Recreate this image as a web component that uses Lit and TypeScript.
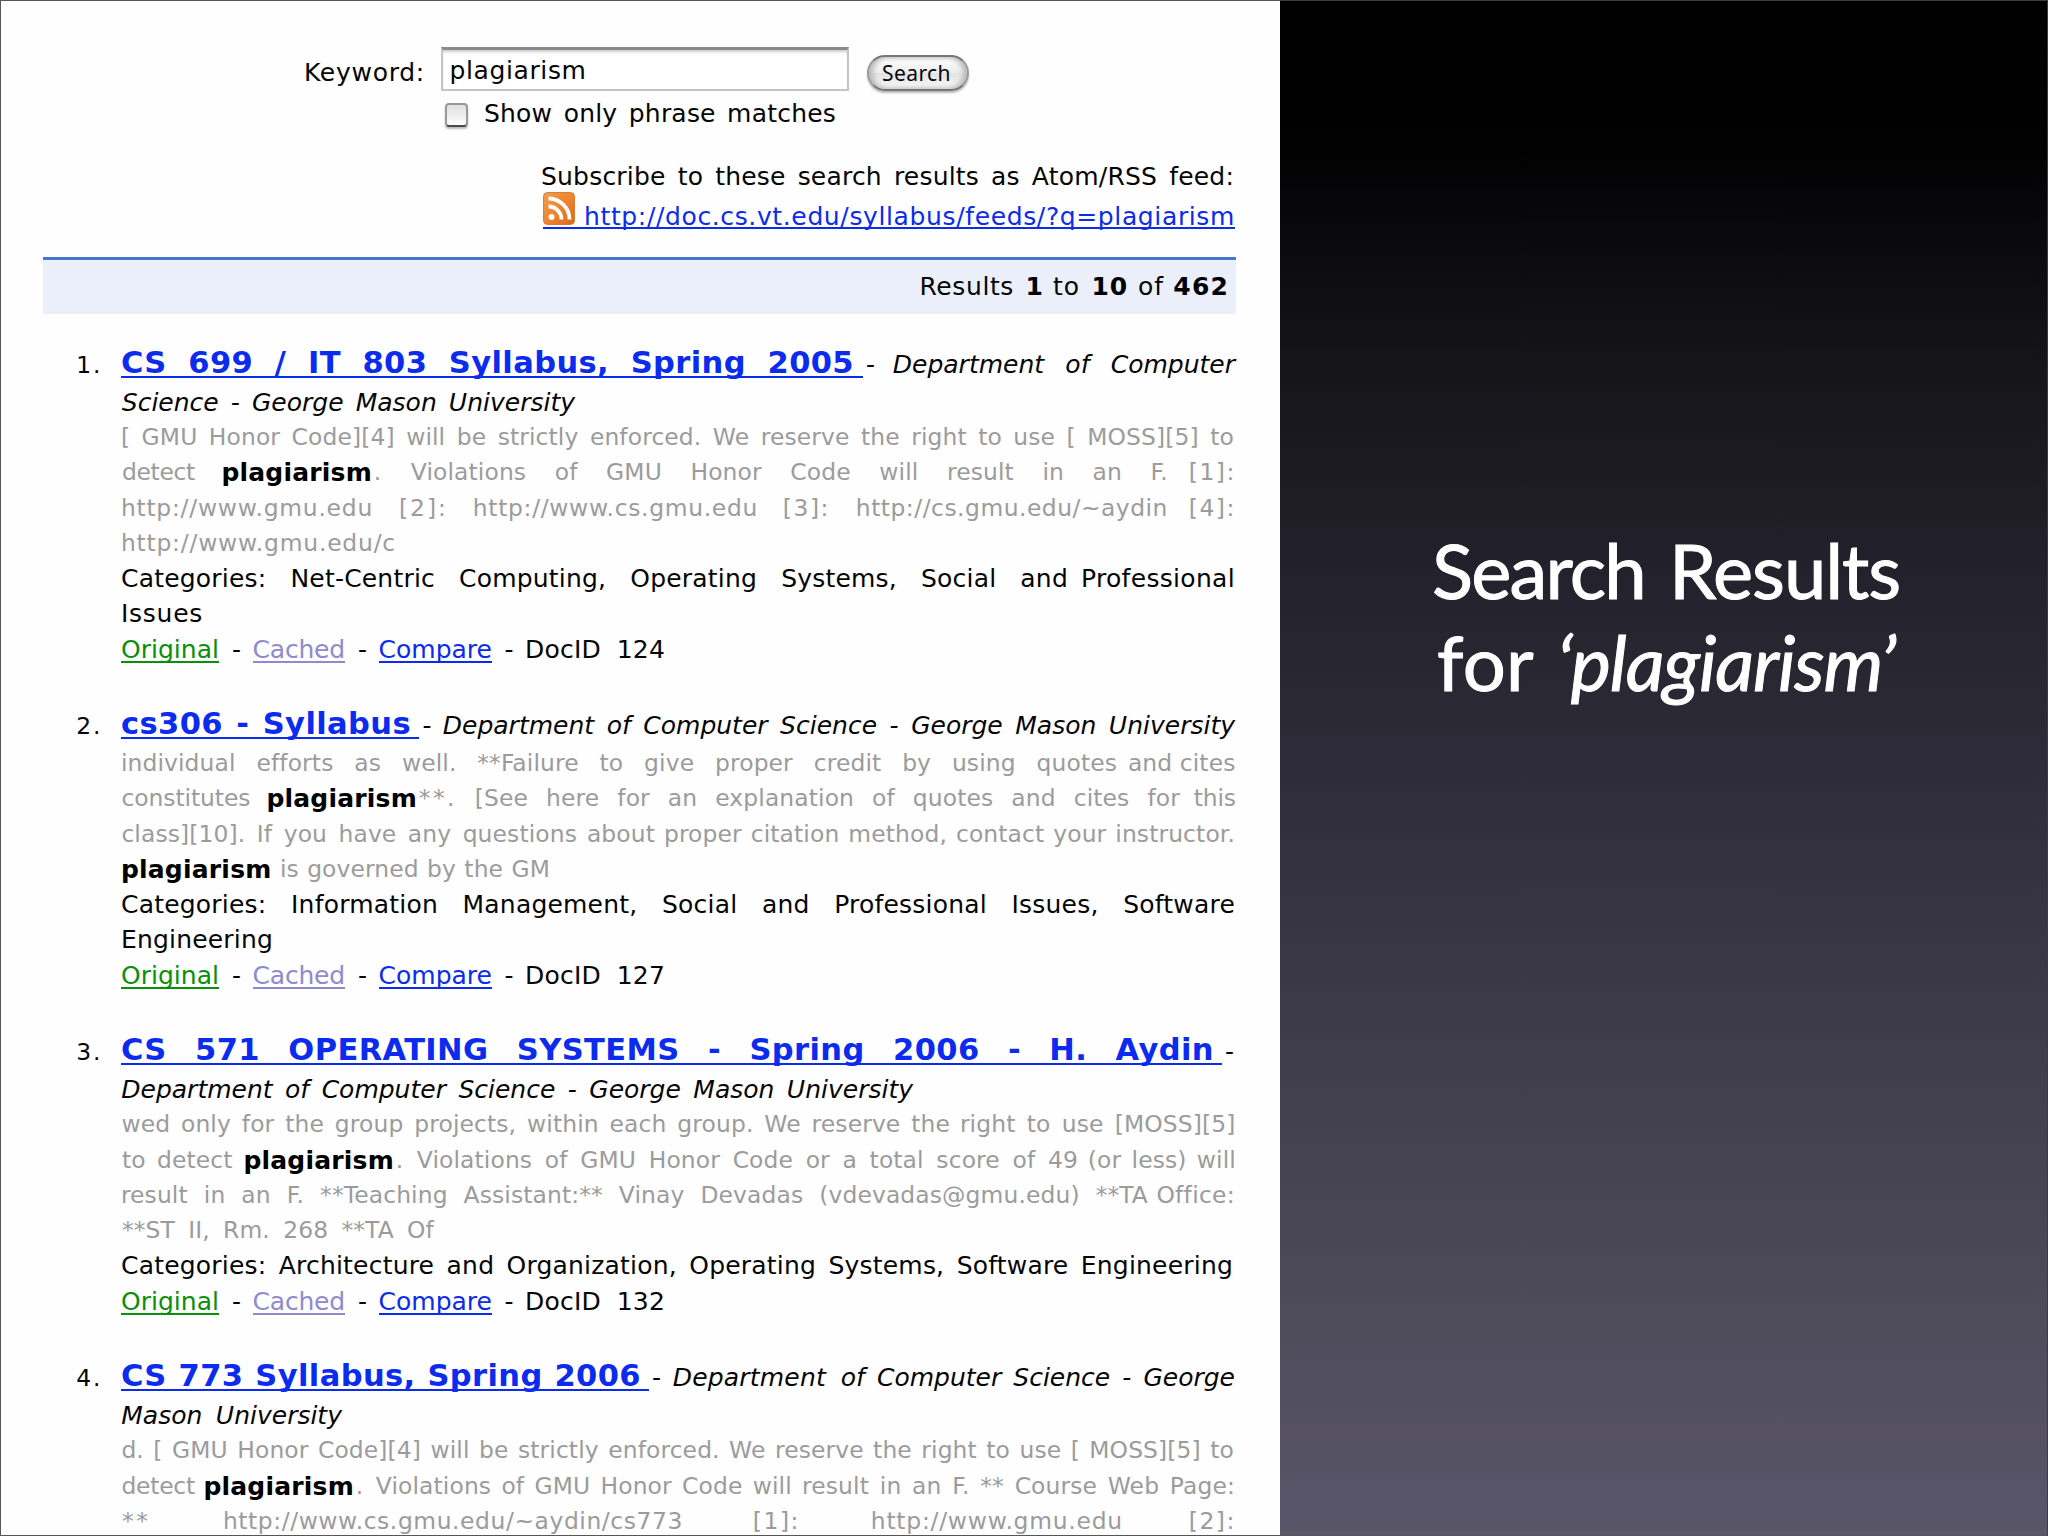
import { LitElement, html, css, svg } from "lit";
import { customElement } from "lit/decorators.js";
import { styleMap } from "lit/directives/style-map.js";

// A run is a stretch of words set between two x positions of the page.
type Run = { t: string; a: number; b: number; c: string; pad?: number };
const r = (c: string, dx = 0) => (t: string, a: number, b: number, pad?: number): Run => ({ t, a: a + dx, b, c, pad });
const T = r("title"), I = r("ital", 0.8), G = r("grey", 0.9), B = r("bold", 0.4), N = r("norm");
const links = (id: number): Run[] => [
  r("norm link green")("Original", 121, 219), N("-", 232, 242),
  r("norm link mauve")("Cached", 252.5, 345), N("-", 358, 368),
  r("norm link blue")("Compare", 378.5, 492), N("-", 504.5, 514.5),
  N("DocID " + id, 525, 665),
];

const results: Run[][][] = [
  [
    [T("CS 699 / IT 803 Syllabus, Spring 2005", 121, 854, 9), N("-", 866, 875), I("Department of Computer", 892, 1235)],
    [I("Science - George Mason University", 121, 575)],
    [G("[ GMU Honor Code][4] will be strictly enforced. We reserve the right to use [ MOSS][5] to", 120, 1234)],
    [G("detect", 121, 195), B("plagiarism", 221, 372), G(".", 373, 380), G("Violations of GMU Honor Code will result in an F.", 410, 1168), G("[1]:", 1188, 1236)],
    [G("http://www.gmu.edu", 120, 373), G("[2]:", 398, 448), G("http://www.cs.gmu.edu", 472, 758), G("[3]:", 782, 830), G("http://cs.gmu.edu/~aydin", 855, 1168), G("[4]:", 1188, 1236)],
    [G("http://www.gmu.edu/c", 120, 396)],
    [N("Categories: Net-Centric Computing, Operating Systems, Social and", 121, 1068), N("Professional", 1081, 1235)],
    [N("Issues", 121, 203)],
    links(124),
  ],
  [
    [T("cs306 - Syllabus", 121, 411, 8), N("-", 422.5, 432), I("Department of Computer Science - George Mason University", 442, 1235)],
    [G("individual efforts as well. **Failure to give proper credit by using quotes", 120, 1117), G("and cites", 1127, 1235.5)],
    [G("constitutes", 120.5, 250.5), B("plagiarism", 266, 417), G("**.", 418, 457), G("[See here for an explanation of quotes and cites for", 474, 1180), G("this", 1193, 1236)],
    [G("class][10]. If you have any questions", 120.5, 577), G("about proper citation method, contact your instructor.", 586, 1235)],
    [B("plagiarism", 120.5, 271.5), G("is governed by the GM", 279, 550)],
    [N("Categories: Information Management, Social and Professional Issues, Software", 121, 1235)],
    [N("Engineering", 121, 273)],
    links(127),
  ],
  [
    [T("CS 571 OPERATING SYSTEMS - Spring 2006 - H. Aydin", 121, 1214, 8), N("-", 1225, 1235)],
    [I("Department of Computer Science - George Mason University", 120.5, 913)],
    [G("wed only for the group projects, within each group. We reserve the", 120.5, 950), G("right to use [MOSS][5]", 959, 1235.5)],
    [G("to detect", 121, 232.5), B("plagiarism", 243, 394), G(".", 395, 402), G("Violations of GMU Honor Code or a total score of 49", 416, 1078), G("(or less) will", 1087, 1236)],
    [G("result in an F. **Teaching Assistant:** Vinay Devadas (vdevadas@gmu.edu) **TA", 120, 1148), G("Office:", 1155.5, 1235)],
    [G("**ST II, Rm. 268 **TA Of", 121, 434)],
    [N("Categories: Architecture and Organization, Operating Systems, Software Engineering", 121, 1233)],
    links(132),
  ],
  [
    [T("CS 773 Syllabus, Spring 2006", 121, 641, 8), N("-", 652, 662), I("Department", 672, 826), I("of Computer Science - George", 840, 1235)],
    [I("Mason University", 120.5, 342)],
    [G("d. [ GMU Honor Code][4] will be strictly enforced. We reserve the right to use [ MOSS][5] to", 120.5, 1234)],
    [G("detect", 120.5, 195), B("plagiarism", 203, 354), G(".", 355, 362), G("Violations of GMU Honor Code will result", 375, 869), G("in an F. ** Course Web Page:", 879, 1235)],
    [G("**", 121, 150.5), G("http://www.cs.gmu.edu/~aydin/cs773", 222, 683), G("[1]:", 752, 800), G("http://www.gmu.edu", 870, 1123), G("[2]:", 1188, 1236)],
  ],
];

// Lays runs out in a row; each run's left margin is the gap after the one before it.
const row = (runs: Run[], from: number) => {
  let x = from;
  return runs.map((q) => {
    const pad = q.pad ?? 0;
    const s = { marginLeft: `${q.a - x}px`, width: `${q.b - q.a + pad}px`, paddingRight: `${pad}px` };
    x = q.b + pad;
    return html`<span class="run ${q.c}" style=${styleMap(s)}><span class="ink">${q.t}</span></span>`;
  });
};

@customElement("app-root")
export class AppRoot extends LitElement {
  static styles = css`
    :host { display: block; width: 2048px; height: 1536px; overflow: hidden; }
    * { box-sizing: border-box; }
    .slide { display: grid; grid-template-columns: 1280px 1fr; height: 1536px; }
    .page {
      height: 1536px; overflow: hidden; background: #fefefe; color: #050505;
      border: 1px solid #555; border-right: 0;
      font: 25px/35.25px "DejaVu Sans", Verdana, sans-serif;
    }
    .line { display: flex; height: 35.25px; white-space: nowrap; }
    .run {
      display: block; flex: none; height: 35.25px; word-spacing: -0.12em;
      text-align: justify; text-align-last: justify; white-space: nowrap;
    }
    .norm { letter-spacing: 0.2px; }
    .grey { font-size: 23.4px; color: #9b9b9d; letter-spacing: 0.12px; }
    .ital { font-style: italic; }
    .bold { font-weight: bold; color: #000; }
    .title {
      font-size: 30.5px; line-height: 31.5px; letter-spacing: 0.4px; font-weight: bold; color: #0b2bee;
      background: linear-gradient(#0b2bee, #0b2bee) 0 29px / 100% 2px no-repeat;
    }
    .link { background: linear-gradient(currentColor, currentColor) 0 29px / 100% 2px no-repeat; }
    .green { color: #0a8f0a; }
    .mauve { color: #8f8ad0; }
    .blue { color: #0b2bee; }
    .form { padding-top: 46px; height: 158px; }
    .query { display: flex; height: 46px; }
    .query .run { margin-top: 8px; }
    .query .field { 
      width: 408px; height: 44px; margin-left: 16px; padding-left: 7px; display: flex;
      border: 2px solid #c4c4c4; border-top: 3px solid #8a8a8a; background: #fff;
      box-shadow: inset 0 3px 3px -1px #ccc;
    }
    .query .field .run { margin-top: 3px; }
    .btn {
      width: 102px; height: 36px; margin: 8px 0 0 18px; display: flex; border-radius: 18px;
      border: 2px solid #777; border-left-color: #999; border-right-color: #999;
      background: linear-gradient(#fff, #ececec 50%, #e2e2e2 52%, #fafafa);
      box-shadow: 0 2px 2px #bbb, inset 4px 0 5px #bbb, inset -4px 0 5px #bbb;
      font-family: "Noto Sans", sans-serif; font-size: 21px;
    }
    .query .btn .run { line-height: 32px; height: 32px; margin-top: 0; }
    .phrase { display: flex; height: 36px; margin-top: 2px; }
    .phrase .run { margin-top: 1px; }
    .check {
      width: 23px; height: 24px; margin: 8px 0 0 444px; border: 2px solid #999; border-bottom-color: #4a4a4a; border-radius: 4px;
      background: linear-gradient(#e0e0e0, #fdfdfd); box-shadow: 0 2px 2px #bbb; flex: none;
    }
    .rssline { background: linear-gradient(#0b2bee, #0b2bee) 542px 35px / 692px 2px no-repeat; height: 45px; margin-top: -2px; }
    .rss { width: 32px; height: 33px; margin-left: 542px; flex: none; }
    .rssline .run { margin-top: 7px; }
    .bar {
      margin: 20px 0 0 42px; width: 1193px; height: 57px; background: #eaeffa; border-top: 3px solid #4478cc;
      padding-top: 9px; display: flex;
    }
    .item { display: flex; }
    .num { width: 102px; padding-right: 0.5px; letter-spacing: 2px; text-align: right; font-size: 23.4px; flex: none; line-height: 35.25px; padding-top: 1px; }
    .body { flex: none; }
    .line.head { height: 38.2px; }
    .results { padding-top: 32.5px; display: flex; flex-direction: column; gap: 41px; }
    .side {
      background: linear-gradient(#000 0%, #020203 10%, #131317 22%, #23212b 37%, #2e2c38 50%, #45434f 75%, #5a566a 100%);
      border: 1px solid #3c3c40; border-left: 0; border-bottom-color: #555;
      color: #fff; font: 76px/92px Lato, "Gill Sans", sans-serif; padding-top: 523px;
      -webkit-text-stroke: 1px #fff;
    }
    .side .line { height: 92px; }
    .side .run { height: 92px; }
  `;

  // Spreads the letters of every one-word run over the run's width.
  async firstUpdated() {
    await document.fonts?.ready;
    this.renderRoot.querySelectorAll<HTMLElement>(".run").forEach((el) => {
      const ink = el.firstElementChild as HTMLElement;
      const text = ink.textContent ?? "";
      const style = getComputedStyle(el);
      const room = parseFloat(style.width) - parseFloat(style.paddingRight);
      const over = room - ink.getBoundingClientRect().width;
      if ((!text.includes(" ") && text.length > 1) || over < -0.5) {
        ink.style.letterSpacing = `${(parseFloat(style.letterSpacing) || 0) + over / text.length}px`;
      }
    });
  }

  render() {
    return html`
      <div class="slide">
        <div class="page">
          <div class="form">
            <div class="query">
              ${row([N("Keyword:", 304, 425)], 1)}
              <div class="field">${row([N("plagiarism", 448.5, 585.5)], 449)}</div>
              <div class="btn">${row([N("Search", 883, 952)], 870)}</div>
            </div>
            <div class="phrase"><div class="check"></div>${row([N("Show only phrase matches", 484, 836)], 468)}</div>
          </div>
          <div class="line">${row([N("Subscribe to these search results as Atom/RSS feed:", 541, 1234)], 1)}</div>
          <div class="line rssline">
            <svg class="rss" viewBox="0 0 32 33">
              <defs><linearGradient id="o" x1="0" y1="0" x2="1" y2="1"><stop offset="0" stop-color="#f0a050" /><stop offset=".5" stop-color="#ee8530" /><stop offset="1" stop-color="#d96a18" /></linearGradient></defs>
              ${svg`<rect x=".5" y=".5" width="31" height="32" rx="4" fill="url(#o)" stroke="#d97f35"/>
              <circle cx="8.5" cy="25" r="3" fill="#fff"/>
              <path d="M5.5 14.5a13 13 0 0 1 13 13M5.5 6.5a21 21 0 0 1 21 21" fill="none" stroke="#fff" stroke-width="3.8"/>`}
            </svg>
            ${row([r("norm blue")("http://doc.cs.vt.edu/syllabus/feeds/?q=plagiarism", 584, 1235)], 575)}
          </div>
          <div class="bar">${row([N("Results", 919.5, 1014), B("1", 1025, 1042), N("to", 1053, 1080), B("10", 1091, 1128), N("of", 1138, 1164), B("462", 1173, 1229)], 43)}</div>
          <div class="results">
            ${results.map((lines, i) => html`
              <div class="item">
                <div class="num">${i + 1}.</div>
                <div class="body">${lines.map((l, k) => html`<div class="line ${k === 0 ? "head" : ""}">${row(l, 103)}</div>`)}</div>
              </div>`)}
          </div>
        </div>
        <div class="side">
          <div class="line">${row([N("Search", 1432, 1645), N("Results", 1669, 1900)], 1280)}</div>
          <div class="line">${row([N("for", 1437, 1534), I("‘plagiarism’", 1556, 1895)], 1280)}</div>
        </div>
      </div>`;
  }
}
